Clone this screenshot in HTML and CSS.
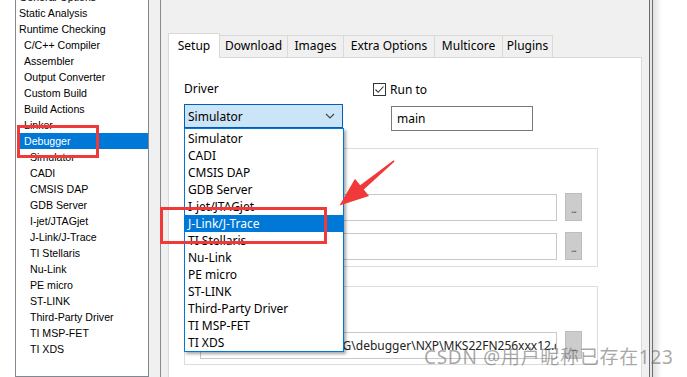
FILE: index.html
```html
<!DOCTYPE html>
<html lang="en">
<head>
    <meta charset="UTF-8">
    <meta name="viewport" content="width=device-width, initial-scale=1.0">
    <title>Options - Debugger</title>
    <link rel="stylesheet" href="styles.css">
</head>
<body>
    <div class="screen">
        <div class="window">
            <div class="gutter"></div>

            <div class="tree">
                <ul class="tree-list">
                    <li class="lvl0">General Options</li>
                    <li class="lvl0">Static Analysis</li>
                    <li class="lvl0">Runtime Checking</li>
                    <li class="lvl1">C/C++ Compiler</li>
                    <li class="lvl1">Assembler</li>
                    <li class="lvl1">Output Converter</li>
                    <li class="lvl1">Custom Build</li>
                    <li class="lvl1">Build Actions</li>
                    <li class="lvl1">Linker</li>
                    <li class="lvl1 selected">Debugger</li>
                    <li class="lvl2">Simulator</li>
                    <li class="lvl2">CADI</li>
                    <li class="lvl2">CMSIS DAP</li>
                    <li class="lvl2">GDB Server</li>
                    <li class="lvl2">I-jet/JTAGjet</li>
                    <li class="lvl2">J-Link/J-Trace</li>
                    <li class="lvl2">TI Stellaris</li>
                    <li class="lvl2">Nu-Link</li>
                    <li class="lvl2">PE micro</li>
                    <li class="lvl2">ST-LINK</li>
                    <li class="lvl2">Third-Party Driver</li>
                    <li class="lvl2">TI MSP-FET</li>
                    <li class="lvl2">TI XDS</li>
                </ul>
            </div>

            <div class="main">
                <div class="tab-strip">
                    <div class="tab tab-setup active">Setup</div>
                    <div class="tab tab-download">Download</div>
                    <div class="tab tab-images">Images</div>
                    <div class="tab tab-extra">Extra Options</div>
                    <div class="tab tab-multicore">Multicore</div>
                    <div class="tab tab-plugins">Plugins</div>
                </div>

                <div class="tab-panel">
                    <div class="top-row">
                        <div class="driver-col">
                            <div class="label">Driver</div>
                            <div class="select">
                                <span>Simulator</span>
                                <svg class="chevron" viewBox="0 0 10 6">
                                    <polyline points="1,1 5,5 9,1" fill="none" stroke="#444" stroke-width="1.1"/>
                                </svg>
                            </div>
                            <ul class="dropdown">
                                <li>Simulator</li>
                                <li>CADI</li>
                                <li>CMSIS DAP</li>
                                <li>GDB Server</li>
                                <li>I-jet/JTAGjet</li>
                                <li class="selected">J-Link/J-Trace</li>
                                <li>TI Stellaris</li>
                                <li>Nu-Link</li>
                                <li>PE micro</li>
                                <li>ST-LINK</li>
                                <li>Third-Party Driver</li>
                                <li>TI MSP-FET</li>
                                <li>TI XDS</li>
                            </ul>
                        </div>

                        <div class="runto-col">
                            <div class="check">
                                <span class="box">
                                    <svg viewBox="0 0 11 11">
                                        <polyline points="1.5,5.5 4.2,8.3 9.5,2.5" fill="none" stroke="#333" stroke-width="1.1"/>
                                    </svg>
                                </span>
                                Run to
                            </div>
                            <div class="text-input main-input">main</div>
                        </div>
                    </div>

                    <div class="group group-macros">
                        <div class="field-row">
                            <div class="text-input path"></div>
                            <div class="browse">...</div>
                        </div>
                        <div class="field-row">
                            <div class="text-input path"></div>
                            <div class="browse">...</div>
                        </div>
                    </div>

                    <div class="group group-device">
                        <div class="field-row">
                            <div class="text-input path path-text">$TOOLKIT_DIR$\CONFIG\debugger\NXP\MKS22FN256xxx12.ddf</div>
                            <div class="browse">...</div>
                        </div>
                    </div>
                </div>
            </div>
        </div>

        <div class="frame-edge"></div>
        <div class="frame-shadow"></div>
    </div>

    <!-- annotations drawn over the screenshot -->
    <div class="mark mark-debugger"></div>
    <div class="mark mark-jlink"></div>
    <svg class="arrow" viewBox="330 150 80 70">
        <polygon points="393.6,160.2 394.6,161.6 363.8,189.4 369,196 339.5,205.5 355,178.8 360.2,185.2" fill="#f03a3a"/>
    </svg>

    <div class="watermark">CSDN @用户昵称已存在123</div>
</body>
</html>
```

FILE: styles.css
```css
* {
    margin: 0;
    padding: 0;
    box-sizing: border-box;
}

body {
    width: 687px;
    height: 377px;
    overflow: hidden;
    position: relative;
    background: #ffffff;
    font-family: 'Noto Sans', 'Noto Sans CJK SC', sans-serif;
    font-size: 12px;
    color: #000;
}

ul {
    list-style: none;
}

.screen {
    display: flex;
    height: 377px;
}

.window {
    display: flex;
    background: #f0f0f0;
}

.gutter {
    width: 15px;
    background: #ffffff;
}

/* Category tree */
.tree {
    width: 134px;
    height: 377px;
    background: #ffffff;
    border: 1px solid #828790;
    border-top: none;
    overflow: hidden;
    font-family: 'Liberation Sans', Arial, sans-serif;
    font-size: 10.6px;
}

.tree-list {
    margin-top: -11px;
}

.tree-list li {
    height: 16px;
    line-height: 16px;
    white-space: nowrap;
}

.tree-list .lvl0 {
    padding-left: 3px;
}

.tree-list .lvl1 {
    margin-left: 3px;
    padding-left: 5px;
}

.tree-list .lvl2 {
    padding-left: 14px;
}

.tree-list .selected {
    background: #0078d7;
    color: #ffffff;
}

/* Options area */
.main {
    width: 489px;
    margin-left: 11px;
    padding: 33px 7px 0 7px;
    border-left: 1px solid #8a8a8a;
}

.tab-strip {
    display: flex;
    align-items: flex-end;
    height: 24px;
}

.tab {
    flex: none;
    height: 22px;
    line-height: 20px;
    text-align: center;
    background: #f0f0f0;
    border: 1px solid #d9d9d9;
    border-bottom: none;
    margin-left: -1px;
    white-space: nowrap;
}

.tab.active {
    height: 25px;
    margin-bottom: -1px;
    margin-left: 0;
    line-height: 23px;
    background: #ffffff;
    position: relative;
    z-index: 2;
}

.tab-setup { width: 52px; }
.tab-download { width: 69px; }
.tab-images { width: 57px; }
.tab-extra { width: 92px; }
.tab-multicore { width: 69px; }
.tab-plugins { width: 51px; }

.tab-panel {
    width: 474px;
    height: 330px;
    background: #ffffff;
    border: 1px solid #d9d9d9;
    padding: 23px 0 0 15px;
}

.top-row {
    display: flex;
    margin-top: -1px;
}

.driver-col {
    width: 159px;
    position: relative;
    z-index: 3;
}

.label {
    height: 17px;
    line-height: 17px;
}

.select {
    margin-top: 7px;
    height: 24px;
    background: #cce4f7;
    border: 1px solid #005fb8;
    display: flex;
    align-items: center;
    justify-content: space-between;
    padding: 0 7px 0 3px;
}

.chevron {
    width: 10px;
    height: 6px;
}

.dropdown {
    position: absolute;
    top: 48px;
    left: 0;
    width: 160px;
    height: 224px;
    background: #ffffff;
    border: 1px solid #0078d7;
    padding-top: 1px;
    box-shadow: 2px 2px 3px rgba(0, 0, 0, 0.35);
}

.dropdown li {
    height: 17px;
    line-height: 17px;
    padding-left: 3px;
    white-space: nowrap;
}

.dropdown .selected {
    background: #0078d7;
    color: #ffffff;
}

.runto-col {
    margin-left: 30px;
}

.check {
    height: 17px;
    line-height: 17px;
    display: flex;
    align-items: center;
    gap: 4px;
    margin-top: 1px;
}

.box {
    width: 13px;
    height: 13px;
    border: 1px solid #333;
    display: flex;
}

.box svg {
    width: 11px;
    height: 11px;
}

.text-input {
    background: #ffffff;
    border: 1px solid #c8c8c8;
    padding-left: 3px;
    white-space: nowrap;
    overflow: hidden;
}

.main-input {
    margin: 8px 0 0 18px;
    width: 142px;
    height: 25px;
    line-height: 23px;
    padding-left: 5px;
    border-color: #7a7a7a;
}

.group {
    width: 414px;
    border: 1px solid #dcdcdc;
    padding: 44px 0 0 15px;
}

.group-macros {
    margin-top: 17px;
    height: 119px;
}

.group-device {
    margin-top: 19px;
    height: 79px;
}

.field-row {
    display: flex;
    align-items: center;
}

.field-row + .field-row {
    margin-top: 11px;
}

.path {
    width: 357px;
    height: 27px;
    line-height: 25px;
    color: #222;
}

.path-text {
    padding-left: 12px;
}

.browse {
    width: 17px;
    height: 28px;
    margin-left: 8px;
    background: #cccccc;
    border: 1px solid #bdbdbd;
    color: #555;
    font-size: 10px;
    line-height: 30px;
    text-align: center;
    letter-spacing: -1px;
}

.frame-edge {
    width: 4px;
    background: #e6e6e6;
    border-left: 1px solid #6d6d6d;
    border-right: 1px solid #6d6d6d;
}

.frame-shadow {
    width: 9px;
    background: linear-gradient(to right, rgba(0, 0, 0, 0.12), rgba(0, 0, 0, 0));
}

/* Red annotation marks */
.mark {
    position: absolute;
    border: 3px solid #f03a3a;
    z-index: 10;
}

.mark-debugger {
    left: 17px;
    top: 125px;
    width: 82px;
    height: 33px;
}

.mark-jlink {
    left: 160px;
    top: 207px;
    width: 167px;
    height: 37px;
}

.arrow {
    position: absolute;
    left: 330px;
    top: 150px;
    width: 80px;
    height: 70px;
    z-index: 10;
}

.watermark {
    position: absolute;
    left: 424px;
    top: 342px;
    font-size: 19px;
    letter-spacing: 0.7px;
    color: rgba(110, 110, 110, 0.6);
    white-space: nowrap;
    z-index: 11;
}
```
